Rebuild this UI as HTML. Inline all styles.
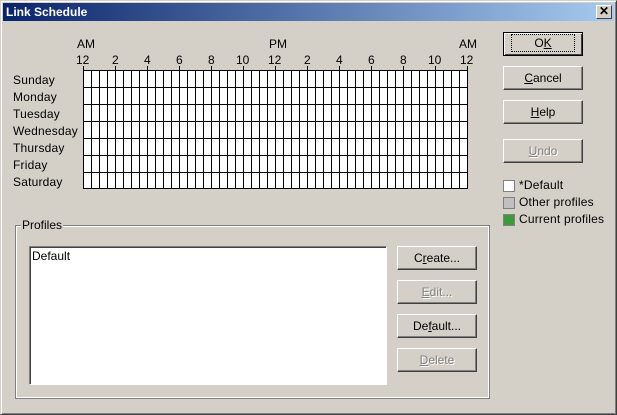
<!DOCTYPE html>
<html><head><style>
*{margin:0;padding:0;box-sizing:border-box}
body{width:617px;height:415px;background:#d4d0c8;font-family:"Liberation Sans",sans-serif;font-size:12px;position:relative;overflow:hidden;color:#000}
.win{position:absolute;left:0;top:0;width:617px;height:415px;border:1px solid;border-color:#d4d0c8 #404040 #404040 #d4d0c8;box-shadow:inset 1px 1px 0 #fff,inset -1px -1px 0 #808080}
.title{position:absolute;left:3px;top:3px;width:611px;height:18px;background:linear-gradient(90deg,#0a246a,#a6caf0);color:#fff;font-weight:bold;font-size:12px;line-height:18px;padding-left:3px}
.x{position:absolute;right:2px;top:2px;width:16px;height:14px;background:#d4d0c8;border:1px solid;border-color:#fff #404040 #404040 #fff;color:#000;font-size:12px;line-height:11px;text-align:center;font-weight:bold}
.a{position:absolute}
.btn{position:absolute;background:#d4d0c8;border:1px solid;border-color:#fff #404040 #404040 #fff;box-shadow:inset -1px -1px 0 #808080;text-align:center;font-size:12px}
.dis{color:#808080;text-shadow:1px 1px 0 #fff}
.sw{position:absolute;width:12px;height:12px;border:1px solid #808080}
.d{letter-spacing:0.2px}
</style></head><body>
<div class="win"></div>
<div class="title">Link Schedule<div class="x">✕</div></div>

<div class="a" style="left:77px;top:37px">AM</div>
<div class="a" style="left:269px;top:37px">PM</div>
<div class="a" style="left:459px;top:37px">AM</div>
<div class="a" style="left:76px;top:53px">12</div>
<div class="a" style="left:112px;top:53px">2</div>
<div class="a" style="left:144px;top:53px">4</div>
<div class="a" style="left:176px;top:53px">6</div>
<div class="a" style="left:208px;top:53px">8</div>
<div class="a" style="left:236px;top:53px">10</div>
<div class="a" style="left:268px;top:53px">12</div>
<div class="a" style="left:304px;top:53px">2</div>
<div class="a" style="left:336px;top:53px">4</div>
<div class="a" style="left:368px;top:53px">6</div>
<div class="a" style="left:400px;top:53px">8</div>
<div class="a" style="left:428px;top:53px">10</div>
<div class="a" style="left:460px;top:53px">12</div>

<div class="a d" style="left:13px;top:72px;line-height:17px">Sunday<br>Monday<br>Tuesday<br>Wednesday<br>Thursday<br>Friday<br>Saturday</div>

<svg class="a" style="left:0;top:0" width="617" height="415">
<rect x="83" y="70" width="384" height="119" fill="#fff"/>
<g stroke="#000" stroke-width="1" shape-rendering="crispEdges">
<path d="M83.5 70V189 M91.5 70V189 M99.5 70V189 M107.5 70V189 M115.5 66V189 M123.5 70V189 M131.5 70V189 M139.5 70V189 M147.5 66V189 M155.5 70V189 M163.5 70V189 M171.5 70V189 M179.5 66V189 M187.5 70V189 M195.5 70V189 M203.5 70V189 M211.5 66V189 M219.5 70V189 M227.5 70V189 M235.5 70V189 M243.5 66V189 M251.5 70V189 M259.5 70V189 M267.5 70V189 M275.5 66V189 M283.5 70V189 M291.5 70V189 M299.5 70V189 M307.5 66V189 M315.5 70V189 M323.5 70V189 M331.5 70V189 M339.5 66V189 M347.5 70V189 M355.5 70V189 M363.5 70V189 M371.5 66V189 M379.5 70V189 M387.5 70V189 M395.5 70V189 M403.5 66V189 M411.5 70V189 M419.5 70V189 M427.5 70V189 M435.5 66V189 M443.5 70V189 M451.5 70V189 M459.5 70V189 M467.5 66V189 M83.5 66V70"/>
<path d="M83 70.5H468 M83 87.5H468 M83 104.5H468 M83 121.5H468 M83 138.5H468 M83 155.5H468 M83 172.5H468 M83 188.5H468"/>
</g>
<rect x="15.5" y="225.5" width="474" height="173" fill="none" stroke="#808080" shape-rendering="crispEdges"/>
<rect x="16.5" y="226.5" width="472" height="171" fill="none" stroke="#fff" shape-rendering="crispEdges"/>
</svg>

<div class="a" style="left:21px;top:218px;background:#d4d0c8;padding:0 1px">Profiles</div>
<div class="a" style="left:29px;top:246px;width:358px;height:139px;background:#fff;border:1px solid;border-color:#808080 #fff #fff #808080;box-shadow:inset 1px 1px 0 #404040;padding:2px 2px">Default</div>

<div class="btn" style="left:503px;top:32px;width:80px;height:24px;border:1px solid #000;box-shadow:inset 1px 1px 0 #fff,inset -1px -1px 0 #404040;line-height:21px"><span style="outline:1px dotted #000;outline-offset:0;padding:1px 22px">O<u>K</u></span></div>
<div class="btn" style="left:503px;top:66px;width:80px;height:24px;line-height:22px"><u>C</u>ancel</div>
<div class="btn" style="left:503px;top:100px;width:80px;height:24px;line-height:22px"><u>H</u>elp</div>
<div class="btn dis" style="left:503px;top:139px;width:80px;height:24px;line-height:22px"><u>U</u>ndo</div>

<div class="sw" style="left:503px;top:180px;background:#fff"></div>
<div class="a d" style="left:519px;top:178px">*Default</div>
<div class="sw" style="left:503px;top:197px;background:#c0c0c0"></div>
<div class="a d" style="left:519px;top:195px">Other profiles</div>
<div class="sw" style="left:503px;top:214px;background:#3c9a3c"></div>
<div class="a d" style="left:519px;top:212px">Current profiles</div>

<div class="btn" style="left:397px;top:246px;width:80px;height:24px;line-height:22px">C<u>r</u>eate...</div>
<div class="btn dis" style="left:397px;top:280px;width:80px;height:24px;line-height:22px"><u>E</u>dit...</div>
<div class="btn" style="left:397px;top:314px;width:80px;height:24px;line-height:22px">De<u>f</u>ault...</div>
<div class="btn dis" style="left:397px;top:348px;width:80px;height:24px;line-height:22px"><u>D</u>elete</div>
</body></html>
